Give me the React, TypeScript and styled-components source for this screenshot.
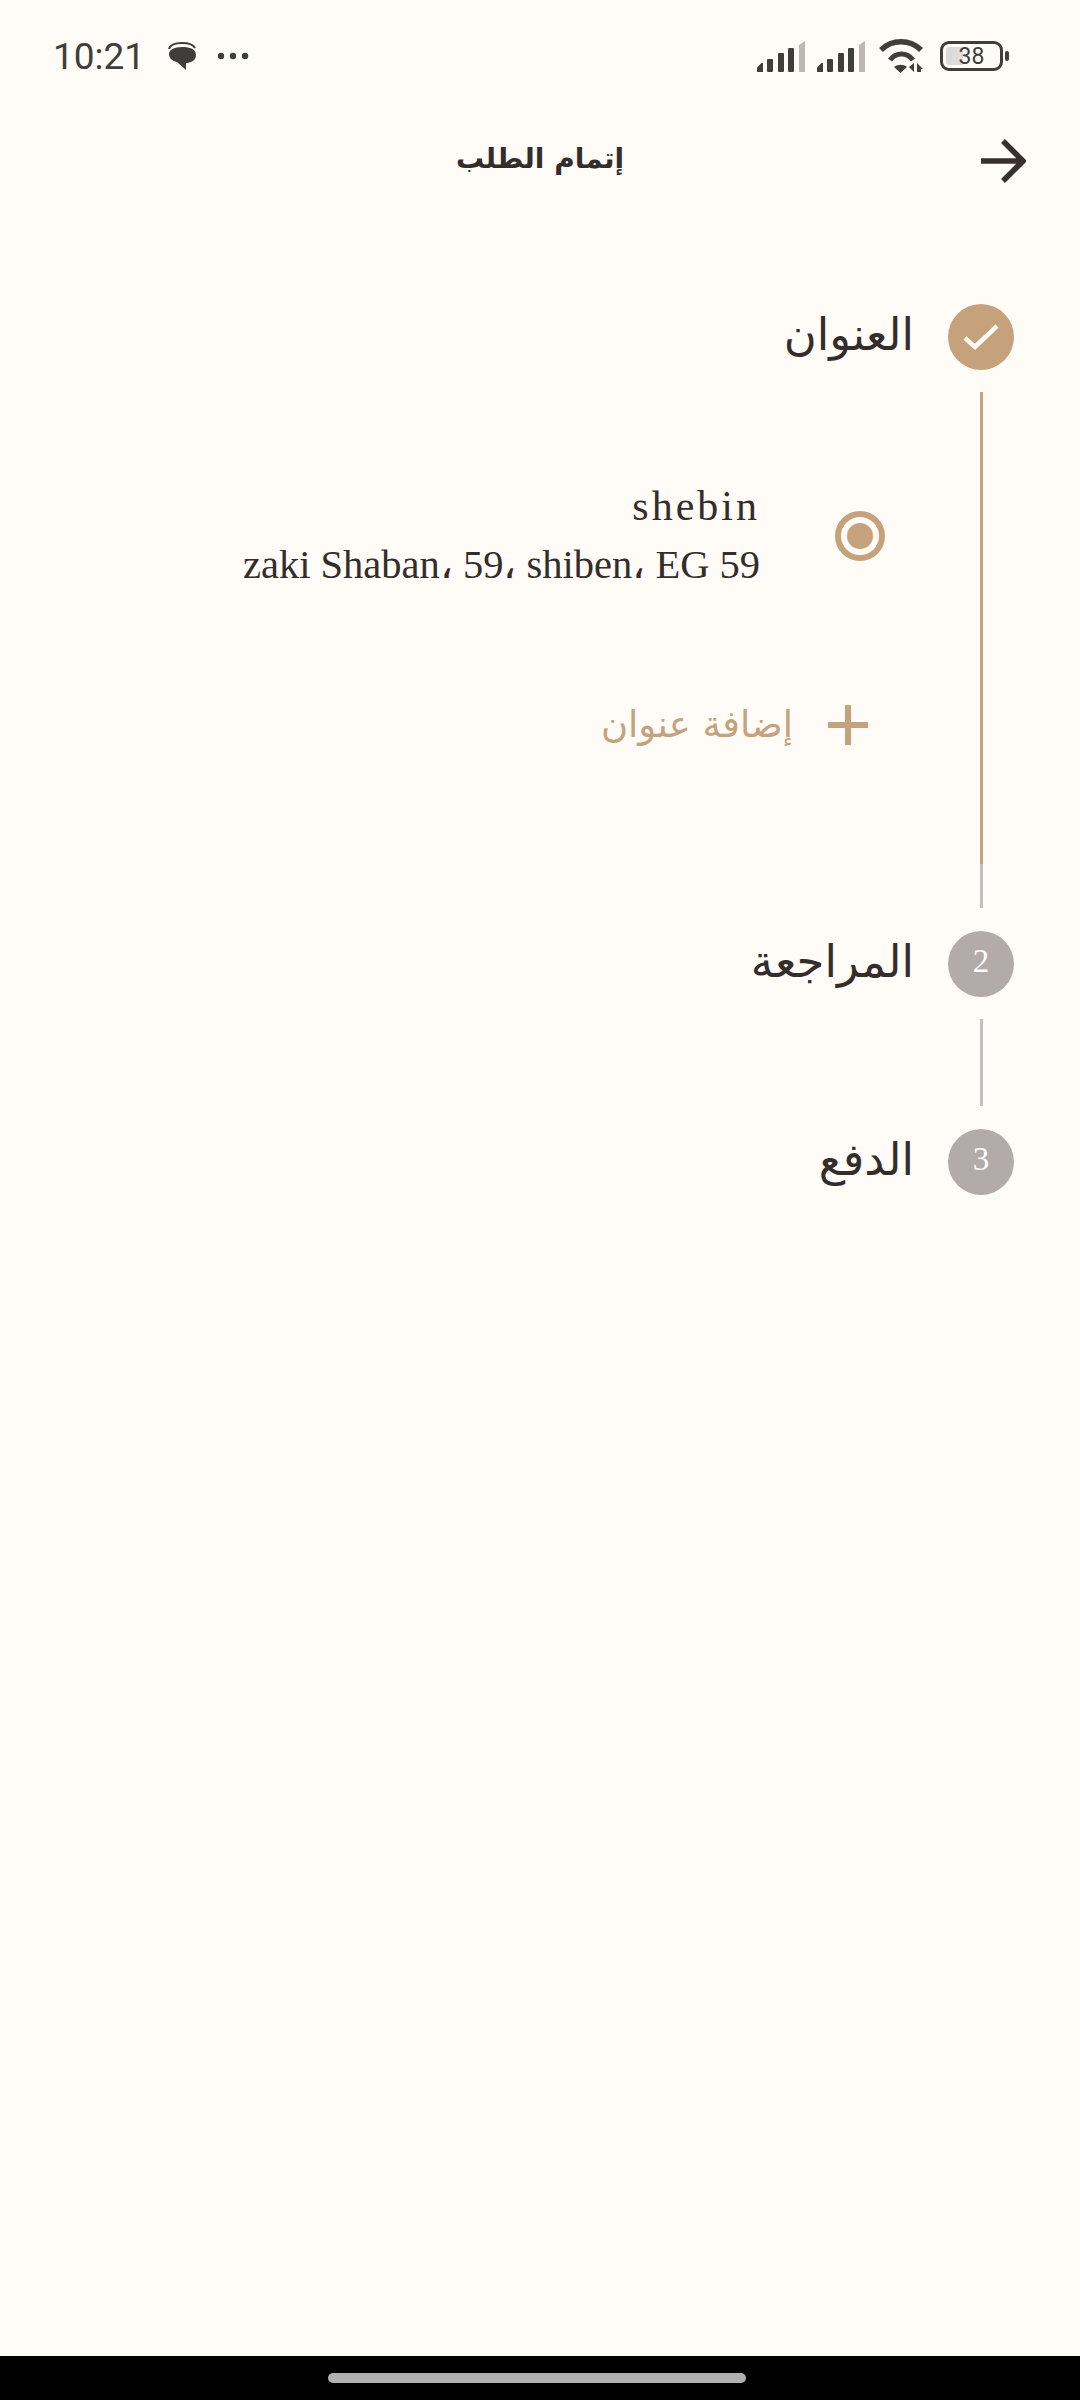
import React from 'react';
import styled, { createGlobalStyle } from 'styled-components';

const ARABIC = '"DejaVu Sans", "Noto Sans", sans-serif';
const LATIN = '"Liberation Serif", "DejaVu Serif", serif';
const TAN = '#c6a27c';
const GREY = '#b2abaa';
const LINE_GREY = '#c4bfbd';
const INK = '#332d2b';

const GlobalStyle = createGlobalStyle`
  html, body {
    margin: 0;
    padding: 0;
    background: #fffcf8;
  }
  #root {
    height: 2400px;
  }
`;

const Page = styled.div`
  height: 2400px;
  display: flex;
  flex-direction: column;
  background: #fffcf8;
  color: ${INK};
`;

const StatusBar = styled.div`
  height: 112px;
  flex: none;
  display: flex;
  align-items: center;
  justify-content: space-between;
  padding: 0 77px 0 53px;
  box-sizing: border-box;
`;

const StatusGroup = styled.div`
  display: flex;
  align-items: center;
`;

const Clock = styled.span`
  font: 400 37px Roboto, sans-serif;
  color: #403e3b;
  margin-right: 23px;
`;

const Battery = styled.div`
  position: relative;
  width: 63px;
  height: 30px;
  box-sizing: border-box;
  border: 3px solid #403e3b;
  border-radius: 9px;
  margin-left: 15px;
  display: flex;
  align-items: center;
  justify-content: center;
  font: 400 23px Roboto, sans-serif;
  color: #403e3b;
  background: linear-gradient(90deg, #dddcda 0 20px, transparent 20px);
  background-clip: content-box;
  padding: 3px;

  &::after {
    content: '';
    position: absolute;
    right: -9px;
    top: 7px;
    width: 4px;
    height: 10px;
    border-radius: 2px;
    background: #403e3b;
  }
`;

const Header = styled.div`
  height: 92px;
  flex: none;
  position: relative;
  display: flex;
  align-items: center;
  justify-content: center;
  font: 700 28px ${ARABIC};
  direction: rtl;
`;

const BackButton = styled.button`
  position: absolute;
  right: 54px;
  top: 26px;
  width: 46px;
  height: 46px;
  border: none;
  background: none;
  padding: 0;
`;

const Steps = styled.div`
  direction: rtl;
  padding: 100px 66px 0 0;
  flex: 1;
`;

const StepRow = styled.div`
  display: flex;
  align-items: center;
  gap: 34px;
  height: 66px;
`;

const StepCircle = styled.div<{ $active?: boolean }>`
  width: 66px;
  height: 66px;
  flex: none;
  box-sizing: border-box;
  padding-bottom: ${p => (p.$active ? 0 : 6)}px;
  border-radius: 50%;
  background: ${p => (p.$active ? TAN : GREY)};
  color: #fffcf8;
  display: flex;
  align-items: center;
  justify-content: center;
  font: 400 33px ${LATIN};
`;

const StepLabel = styled.div`
  font: 400 45px ${ARABIC};
  color: ${INK};
  padding-bottom: 5px;
`;

const StepBody = styled.div<{ $height: number }>`
  display: flex;
  height: ${p => p.$height}px;
  margin: 22px 0 23px;
`;

const Rail = styled.div`
  width: 66px;
  flex: none;
  display: flex;
  justify-content: center;
`;

const RailLine = styled.div<{ $tanUntil?: number }>`
  width: 3px;
  height: 100%;
  background: ${p =>
    p.$tanUntil
      ? `linear-gradient(180deg, ${TAN} ${p.$tanUntil}px, ${LINE_GREY} ${p.$tanUntil}px)`
      : LINE_GREY};
`;

const StepContent = styled.div`
  padding: 85px 63px 0 0;
  flex: 1;
`;

const AddressRow = styled.div`
  display: flex;
  align-items: center;
  gap: 75px;
`;

const Radio = styled.div`
  width: 50px;
  height: 50px;
  box-sizing: border-box;
  flex: none;
  border: 6px solid ${TAN};
  border-radius: 50%;
  display: flex;
  align-items: center;
  justify-content: center;

  &::after {
    content: '';
    width: 26px;
    height: 26px;
    border-radius: 50%;
    background: ${TAN};
  }
`;

const AddressText = styled.div`
  font-family: ${LATIN};
  color: ${INK};
`;

const AddressName = styled.div`
  font-size: 42px;
  letter-spacing: 3px;
  line-height: 58px;
`;

const AddressLine = styled.div`
  font-size: 40.5px;
  line-height: 60px;
`;

const AddRow = styled.div`
  display: flex;
  align-items: center;
  gap: 35px;
  margin: 108px 17px 0 0;
`;

const AddLabel = styled.div`
  font: 400 37px ${ARABIC};
  color: ${TAN};
`;

const HomeBar = styled.div`
  height: 44px;
  flex: none;
  background: #000;
  display: flex;
  justify-content: center;
  padding: 17px 6px 0 0;
  box-sizing: border-box;
`;

const HomePill = styled.div`
  width: 418px;
  height: 10px;
  border-radius: 5px;
  background: #b0b0b0;
`;

const SignalIcon = ({ gap }: { gap?: number }) => (
  <svg width="48" height="31" viewBox="0 0 48 31" style={{ marginLeft: gap }}>
    <path d="M0 31v-4.5L4.5 22H6v9z" fill="#403e3b" />
    <rect x="10" y="18" width="6" height="13" rx="1" fill="#403e3b" />
    <rect x="21" y="12" width="6" height="19" rx="1" fill="#403e3b" />
    <rect x="31" y="7" width="6" height="24" rx="1" fill="#403e3b" />
    <path d="M42 4l6-4v31h-6z" fill="#bcb9b5" />
  </svg>
);

const App: React.FC = () => (
  <Page>
    <GlobalStyle />
    <StatusBar>
      <StatusGroup>
        <Clock>10:21</Clock>
        <svg width="29" height="29" viewBox="0 0 29 29">
          <path d="M1 7c1-4 6-6 13-6s11 1 13 5" fill="none" stroke="#403e3b" strokeWidth="2" />
          <path d="M14 5c8 0 14 2 14 8 0 6-6 8-10 8v7L9 20c-5-1-8-4-8-8 0-4 5-7 13-7z" fill="#403e3b" />
        </svg>
        <svg width="32" height="8" viewBox="0 0 32 8" style={{ marginLeft: 20 }}>
          <circle cx="4" cy="4" r="3.2" fill="#403e3b" />
          <circle cx="16" cy="4" r="3.2" fill="#403e3b" />
          <circle cx="28" cy="4" r="3.2" fill="#403e3b" />
        </svg>
      </StatusGroup>
      <StatusGroup>
        <SignalIcon />
        <SignalIcon gap={12} />
        <svg width="47" height="34" viewBox="0 0 47 34" style={{ marginLeft: 13 }}>
          <path d="M3 11C14 0 32 0 43 11" fill="none" stroke="#403e3b" strokeWidth="5.5" />
          <path d="M12 21C18 13 29 13 35 21" fill="none" stroke="#403e3b" strokeWidth="5" />
          <path d="M16 28c4-3 9-3 13 0l-6.5 6z" fill="#403e3b" />
          <path d="M36 24v9l-5-5zM39 24l6 6h-2v3h-4z" fill="#403e3b" />
        </svg>
        <Battery>38</Battery>
      </StatusGroup>
    </StatusBar>
    <Header>
      إتمام الطلب
      <BackButton>
        <svg width="46" height="46" viewBox="0 0 46 46">
          <path d="M1 23h40M23 3l20 20-20 20" fill="none" stroke="#38302e" strokeWidth="5.5" />
        </svg>
      </BackButton>
    </Header>
    <Steps>
      <StepRow>
        <StepCircle $active>
          <svg width="38" height="28" viewBox="0 0 38 28">
            <path d="M3 15l10 9L35 3" fill="none" stroke="#fffcf8" strokeWidth="4.5" />
          </svg>
        </StepCircle>
        <StepLabel>العنوان</StepLabel>
      </StepRow>
      <StepBody $height={516}>
        <Rail>
          <RailLine $tanUntil={472} />
        </Rail>
        <StepContent>
          <AddressRow>
            <Radio />
            <AddressText>
              <AddressName>shebin</AddressName>
              <AddressLine>zaki Shaban، 59، shiben، EG 59</AddressLine>
            </AddressText>
          </AddressRow>
          <AddRow>
            <svg width="40" height="40" viewBox="0 0 40 40">
              <path d="M20 0v40M0 20h40" stroke={TAN} strokeWidth="6" />
            </svg>
            <AddLabel>إضافة عنوان</AddLabel>
          </AddRow>
        </StepContent>
      </StepBody>
      <StepRow>
        <StepCircle>2</StepCircle>
        <StepLabel>المراجعة</StepLabel>
      </StepRow>
      <StepBody $height={87}>
        <Rail>
          <RailLine />
        </Rail>
      </StepBody>
      <StepRow>
        <StepCircle>3</StepCircle>
        <StepLabel>الدفع</StepLabel>
      </StepRow>
    </Steps>
    <HomeBar>
      <HomePill />
    </HomeBar>
  </Page>
);

export default App;
